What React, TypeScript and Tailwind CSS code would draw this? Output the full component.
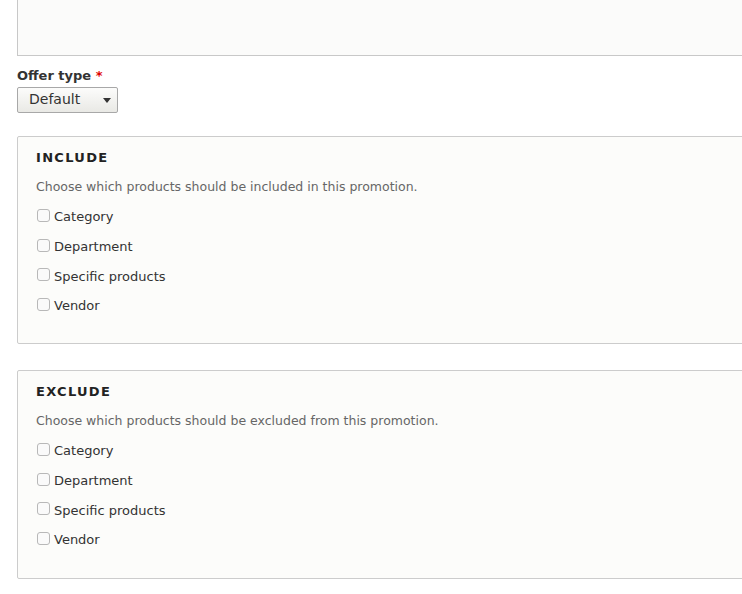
import React from "react";

const items = ["Category", "Department", "Specific products", "Vendor"];

function Fieldset({ title, desc, extra }: { title: string; desc: string; extra?: boolean }) {
  return (
    <div
      className={
        "ml-[17px] w-[760px] border border-[#cccccc] bg-[#fcfcfa] rounded-[2px] pt-[13px] pl-[18px] " +
        (extra ? "pb-[28px]" : "pb-[27px]")
      }
    >
      <div className="text-[13px] leading-[16px] font-bold tracking-[0.1em] text-[#222222] uppercase">{title}</div>
      <div className="mt-[12px] text-[12.5px] leading-[18px] text-[#666666]">{desc}</div>
      <div className="mt-[11px] flex flex-col gap-[9.7px]">
        {items.map((it) => (
          <div key={it} className="flex items-center h-[20px] text-[13px] text-[#333333]">
            <span className="ml-[1px] w-[13px] h-[13px] rounded-[3px] border border-[#b8b8b8] bg-[#fafafa] -mt-[3px]" />
            <span className="ml-[4px]">{it}</span>
          </div>
        ))}
      </div>
    </div>
  );
}

export default function App() {
  return (
    <div
      className="w-[742px] h-[594px] overflow-hidden bg-white"
      style={{ fontFamily: '"DejaVu Sans", sans-serif' }}
    >
      <div className="ml-[17px] w-[760px] h-[56px] border border-t-0 border-[#c8c8c8] bg-[#fbfbfa]" />
      <div className="ml-[17px] mt-[11px] text-[13px] leading-[18px] font-bold text-[#333333]">
        Offer type <span className="text-[#e00000]">*</span>
      </div>
      <div className="ml-[17px] mt-[2px] w-[101px] h-[26px] border border-[#a8a8a8] rounded-[2px] bg-gradient-to-b from-[#fcfcfb] to-[#e9e9e5] flex items-center pl-[11px] pr-[6px] text-[14px] text-[#333333]">
        <span className="flex-1 -mt-[1px]">Default</span>
        <svg width="8" height="5" viewBox="0 0 8 5" className="mt-[1px]">
          <path d="M0 0 L8 0 L4 5 Z" fill="#333333" />
        </svg>
      </div>
      <div className="mt-[23px]">
        <Fieldset title="Include" desc="Choose which products should be included in this promotion." />
      </div>
      <div className="mt-[26px]">
        <Fieldset title="Exclude" desc="Choose which products should be excluded from this promotion." extra />
      </div>
    </div>
  );
}
